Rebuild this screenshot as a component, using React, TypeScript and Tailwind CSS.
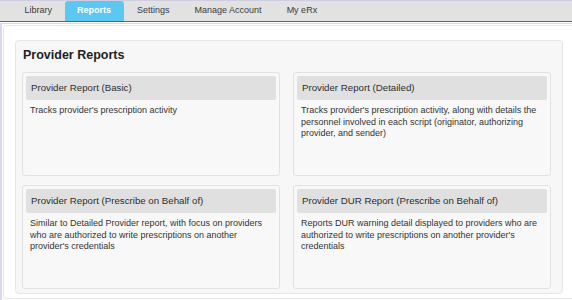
import React from 'react';

const tabs = [
  { id: 'library', label: 'Library' },
  { id: 'reports', label: 'Reports', active: true },
  { id: 'settings', label: 'Settings' },
  { id: 'account', label: 'Manage Account' },
  { id: 'myerx', label: 'My eRx' },
];

const reports = [
  {
    id: 'basic',
    title: 'Provider Report (Basic)',
    text: "Tracks provider's prescription activity",
  },
  {
    id: 'detailed',
    title: 'Provider Report (Detailed)',
    text: "Tracks provider's prescription activity, along with details the personnel involved in each script (originator, authorizing provider, and sender)",
  },
  {
    id: 'pobo',
    title: 'Provider Report (Prescribe on Behalf of)',
    text: "Similar to Detailed Provider report, with focus on providers who are authorized to write prescriptions on another provider's credentials",
  },
  {
    id: 'dur',
    title: 'Provider DUR Report (Prescribe on Behalf of)',
    text: "Reports DUR warning detail displayed to providers who are authorized to write prescriptions on another provider's credentials",
  },
];

export default function App() {
  return (
    <div
      className="w-[572px] h-[300px] overflow-hidden bg-white"
      style={{ fontFamily: '"Liberation Sans", Arial, sans-serif' }}
    >
      {/* Tab strip */}
      <div className="h-[21px] flex items-end pl-3 bg-[#e2e2e2] border-t border-[#cfcde0]">
        {tabs.map((tab) => (
          <div
            key={tab.id}
            className={
              tab.active
                ? 'h-[20px] px-[12.5px] mr-px flex items-center rounded-t-[3px] bg-[#5cc8f2] text-white font-bold text-[9px]'
                : 'h-[20px] px-[12.5px] flex items-center text-[#3a3a3a] text-[9px]'
            }
          >
            {tab.label}
          </div>
        ))}
      </div>
      <div className="h-px bg-[#46668a]" />
      <div className="h-px bg-white" />

      {/* Page body */}
      <div className="border-t border-l-2 border-[#dcd7ee] h-[300px]">
        <div className="w-[600px] h-[274px] ml-px mt-px pl-[11px] pt-[14px] border border-[#e6e6e6] rounded-[3px] bg-white">
          <div className="w-[548px] h-[254px] pt-[6px] border border-[#e6e6e6] rounded-[4px] bg-[#f7f7f7]">
            <h2 className="pl-[7px] text-[12.5px] leading-[16px] font-bold text-[#222]">
              Provider Reports
            </h2>
            <div className="mt-[9px] pl-[6px] grid grid-cols-[258px_258px] auto-rows-[104px] gap-x-[13px] gap-y-[9px]">
              {reports.map((r) => (
                <div
                  key={r.id}
                  className="p-[3px] border border-[#e2e2e2] rounded-[3px] bg-[#f8f8f8]"
                >
                  <div className="h-[24px] pl-[5px] flex items-center rounded-[2px] bg-[#e0e0e0] text-[9.7px] text-[#2e2e2e]">
                    {r.title}
                  </div>
                  <p className="mt-[5px] px-[4px] text-[9px] leading-[11.5px] text-[#333]">
                    {r.text}
                  </p>
                </div>
              ))}
            </div>
          </div>
        </div>
      </div>
    </div>
  );
}
